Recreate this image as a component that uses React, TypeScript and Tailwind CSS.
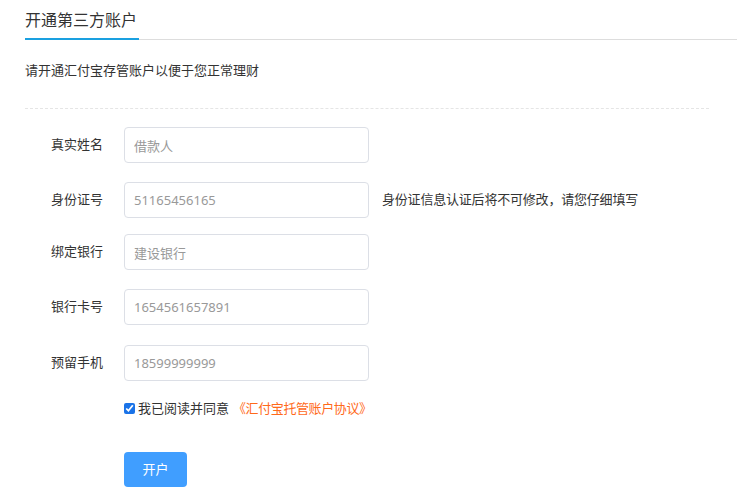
import React from "react";

const rows = [
  { label: "真实姓名", value: "借款人", mt: "mt-[19px]" },
  { label: "身份证号", value: "51165456165", hint: "身份证信息认证后将不可修改，请您仔细填写", mt: "mt-[19px]" },
  { label: "绑定银行", value: "建设银行", mt: "mt-[16px]" },
  { label: "银行卡号", value: "1654561657891", mt: "mt-[19px]" },
  { label: "预留手机", value: "18599999999", mt: "mt-[20px]" },
];

export default function App() {
  return (
    <div
      className="w-[737px] h-[500px] bg-white text-[#333] overflow-hidden"
      style={{ fontFamily: '"Noto Sans", "Noto Sans CJK SC", sans-serif' }}
    >
      {/* header */}
      <div className="pt-[8px] border-b border-[#dddddd] ml-[25px]">
        <div className="inline-block text-[16px] leading-[24px] pb-[6px] border-b-2 border-[#1aa0e0] -mb-px pr-[2px]">
          开通第三方账户
        </div>
      </div>

      <div className="px-[25px]">
        <p className="text-[13px] leading-[20px] mt-[20px]">请开通汇付宝存管账户以便于您正常理财</p>
        <div className="mt-[28px] w-[684px] border-t border-dashed border-[#e5e5e5]" />

        <div>
          {rows.map((r, i) => (
            <div key={r.label} className={`flex items-center ${i === 0 ? "mt-[18px]" : r.mt}`}>
              <label className="w-[99px] pl-[26px] text-[13px]">{r.label}</label>
              <input
                readOnly
                defaultValue={r.value}
                className="w-[245px] h-[36px] border border-[#dcdfe6] rounded-[4px] px-[9px] text-[13px] text-[#999] outline-none"
              />
              {r.hint && <span className="ml-[13px] text-[13px] tracking-[-0.2px]">{r.hint}</span>}
            </div>
          ))}
        </div>

        <div className="ml-[99px] mt-[17px] flex items-center text-[13px] leading-[20px]">
          <input type="checkbox" defaultChecked className="w-[11px] h-[11px] mr-[3px] accent-[#1a73e8]" />
          <span>我已阅读并同意</span>
          <span className="ml-[4px] text-[#ff6a1a] tracking-[-0.4px]">《汇付宝托管账户协议》</span>
        </div>

        <button className="ml-[99px] mt-[34px] w-[63px] h-[35px] rounded-[4px] bg-[#409eff] text-white text-[13px]">
          开户
        </button>
      </div>
    </div>
  );
}
